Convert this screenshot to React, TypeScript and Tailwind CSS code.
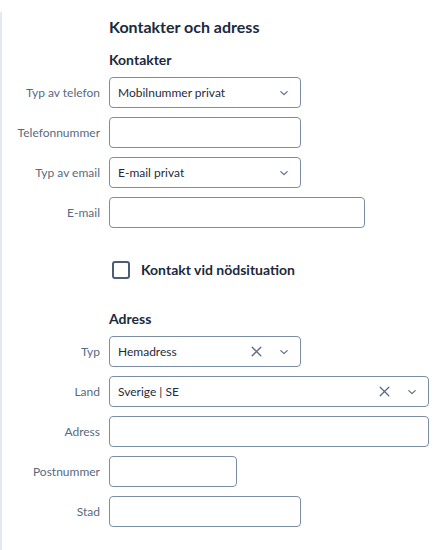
import React from "react";

const font = { fontFamily: "Lato, 'Liberation Sans', sans-serif" };

function Chevron() {
  return (
    <svg width="10" height="10" viewBox="0 0 10 10" fill="none" className="shrink-0">
      <path d="M1.8 3.6 L5 6.6 L8.2 3.6" stroke="#5b6c82" strokeWidth="1.2" strokeLinecap="round" strokeLinejoin="round" />
    </svg>
  );
}

function Cross() {
  return (
    <svg width="11" height="11" viewBox="0 0 11 11" fill="none" className="shrink-0">
      <path d="M1.2 1.2 L9.8 9.8 M9.8 1.2 L1.2 9.8" stroke="#5b6c82" strokeWidth="1.3" strokeLinecap="round" />
    </svg>
  );
}

function Label({ children }: { children: React.ReactNode }) {
  return <div className="text-right text-[12px] text-[#586a80] leading-none self-center">{children}</div>;
}

function Box({ w, children }: { w: string; children?: React.ReactNode }) {
  return (
    <div className={`${w} h-[31px] rounded-[4px] border border-[#7b8da2] bg-white flex items-center pl-[8px] pr-[11px] text-[12px] text-[#1e2b3c]`}>
      {children}
    </div>
  );
}

export default function App() {
  return (
    <div className="w-[443px] h-[550px] bg-white pt-[12px]" style={font}>
      <div className="border-l-2 border-[#e3e9f3] h-[538px]">
        <div className="grid grid-cols-[98px_auto] gap-x-[9px] items-center">
          <div />
          <div className="text-[16px] font-bold text-[#1b2a3d] mt-[3px] leading-[24px]">Kontakter och adress</div>
          <div />
          <div className="text-[14px] font-bold text-[#1b2a3d] mt-[11px] leading-[20px]">Kontakter</div>
        </div>
        <div className="grid grid-cols-[98px_auto] gap-x-[9px] gap-y-[9px] mt-[7px] justify-start">
          <Label>Typ av telefon</Label>
          <Box w="w-[192px]">
            <span className="flex-1">Mobilnummer privat</span>
            <Chevron />
          </Box>
          <Label>Telefonnummer</Label>
          <Box w="w-[192px]" />
          <Label>Typ av email</Label>
          <Box w="w-[192px]">
            <span className="flex-1">E-mail privat</span>
            <Chevron />
          </Box>
          <Label>E-mail</Label>
          <Box w="w-[256px]" />
        </div>
        <div className="grid grid-cols-[98px_auto] gap-x-[9px] mt-[31px]">
          <div />
          <div className="flex items-center pl-[3px]">
            <div className="w-[18px] h-[18px] rounded-[3px] border-2 border-[#4b5e76]" />
            <span className="ml-[11px] text-[14px] font-bold text-[#1b2a3d]">Kontakt vid nödsituation</span>
          </div>
        </div>
        <div className="grid grid-cols-[98px_auto] gap-x-[9px] mt-[29px]">
          <div />
          <div className="text-[14px] font-bold text-[#1b2a3d] leading-[20px]">Adress</div>
        </div>
        <div className="grid grid-cols-[98px_auto] gap-x-[9px] gap-y-[9px] mt-[7px] justify-start">
          <Label>Typ</Label>
          <Box w="w-[192px]">
            <span className="flex-1">Hemadress</span>
            <Cross />
            <span className="w-[17px]" />
            <Chevron />
          </Box>
          <Label>Land</Label>
          <Box w="w-[320px]">
            <span className="flex-1">Sverige | SE</span>
            <Cross />
            <span className="w-[17px]" />
            <Chevron />
          </Box>
          <Label>Adress</Label>
          <Box w="w-[320px]" />
          <Label>Postnummer</Label>
          <Box w="w-[128px]" />
          <Label>Stad</Label>
          <Box w="w-[192px]" />
        </div>
      </div>
    </div>
  );
}
